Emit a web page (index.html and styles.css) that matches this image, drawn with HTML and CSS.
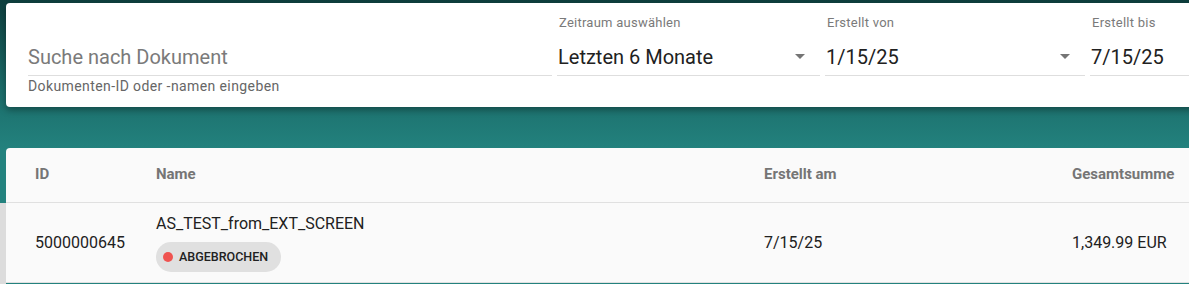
FILE: index.html
```html
<!DOCTYPE html>
<html lang="de">
	<head>
		<meta charset="UTF-8">
		<title>Dokumente</title>
		<link rel="stylesheet" href="styles.css">
	</head>
	<body>
		<div class="side-strip"></div>

		<div class="filter-card">
			<div class="field field-search">
				<div class="field-value placeholder">Suche nach Dokument</div>
				<div class="field-hint">Dokumenten-ID oder -namen eingeben</div>
			</div>
			<div class="field field-select">
				<div class="field-label">Zeitraum auswählen</div>
				<div class="field-value">
					<span>Letzten 6 Monate</span>
					<span class="arrow"></span>
				</div>
			</div>
			<div class="field field-date">
				<div class="field-label">Erstellt von</div>
				<div class="field-value">
					<span>1/15/25</span>
					<span class="arrow"></span>
				</div>
			</div>
			<div class="field field-date">
				<div class="field-label">Erstellt bis</div>
				<div class="field-value">
					<span>7/15/25</span>
				</div>
			</div>
		</div>

		<div class="table-card">
			<div class="row row-head">
				<div>ID</div>
				<div>Name</div>
				<div>Erstellt am</div>
				<div>Gesamtsumme</div>
			</div>
			<div class="row row-body">
				<div>5000000645</div>
				<div class="name-cell">
					<div class="doc-name">AS_TEST_from_EXT_SCREEN</div>
					<div class="chip"><span class="dot"></span>ABGEBROCHEN</div>
				</div>
				<div>7/15/25</div>
				<div>1,349.99 EUR</div>
			</div>
		</div>
	</body>
</html>
```

FILE: styles.css
```css
*{
	padding: 0;
	margin: 0;
	box-sizing: border-box;
}
html,body{
	height: 100%;
	overflow: hidden;
}
body{
	font-family: Roboto, "Liberation Sans", sans-serif;
	color: #212121;
	background: linear-gradient(180deg, #0e3f3e 0, #1b6d6a 90px, #23827e 150px, #23827e 100%);
	position: relative;
}

.side-strip{
	position: absolute;
	left: 0;
	top: 203px;
	bottom: 0;
	width: 6px;
	background: #dcdcdc;
}

.filter-card{
	display: flex;
	align-items: flex-start;
	gap: 5px;
	width: 1400px;
	height: 104px;
	margin: 3px 0 0 6px;
	padding-left: 22px;
	background: #fff;
	border-radius: 4px;
	box-shadow: 0 3px 7px rgba(0,0,0,0.35);
}
.field{
	flex-shrink: 0;
	padding-top: 11px;
}
.field-search{
	width: 524px;
	padding-top: 29px;
}
.field-select{
	width: 263px;
}
.field-date{
	width: 260px;
}
.field-label{
	height: 18px;
	line-height: 18px;
	font-size: 13px;
	letter-spacing: 0.25px;
	color: #7a7a7a;
	padding-left: 2px;
}
.field-value{
	display: flex;
	align-items: center;
	justify-content: space-between;
	height: 44px;
	padding: 13px 15px 7px 1px;
	font-size: 20px;
	line-height: 24px;
	border-bottom: 1px solid #dedede;
}
.field-value.placeholder{
	padding-left: 0;
	color: #7a7a7a;
}
.arrow{
	width: 0;
	height: 0;
	border-left: 5px solid transparent;
	border-right: 5px solid transparent;
	border-top: 5px solid #757575;
}
.field-hint{
	margin-top: 2px;
	font-size: 14px;
	letter-spacing: 0.4px;
	line-height: 16px;
	color: #666;
}

.table-card{
	width: 1400px;
	margin: 41px 0 0 6px;
	background: #fafafa;
	border-radius: 4px 4px 0 0;
}
.row{
	display: grid;
	grid-template-columns: 121px 608px 308px 1fr;
	align-items: center;
	padding-left: 29px;
	border-bottom: 1px solid #e0e0e0;
}
.row-head{
	height: 55px;
	padding-bottom: 3px;
	font-size: 15px;
	font-weight: 700;
	color: #757575;
}
.row-body{
	height: 80px;
	font-size: 16px;
}
.name-cell{
	display: flex;
	flex-direction: column;
	align-items: flex-start;
	gap: 8px;
}
.doc-name{
	line-height: 20px;
}
.chip{
	display: flex;
	align-items: center;
	height: 30px;
	padding: 0 13px 0 7px;
	border-radius: 15px;
	background: #e0e0e0;
	font-size: 12.5px;
	font-weight: 500;
}
.dot{
	width: 10px;
	height: 10px;
	margin-right: 6px;
	border-radius: 50%;
	background: #ef5350;
}
```
